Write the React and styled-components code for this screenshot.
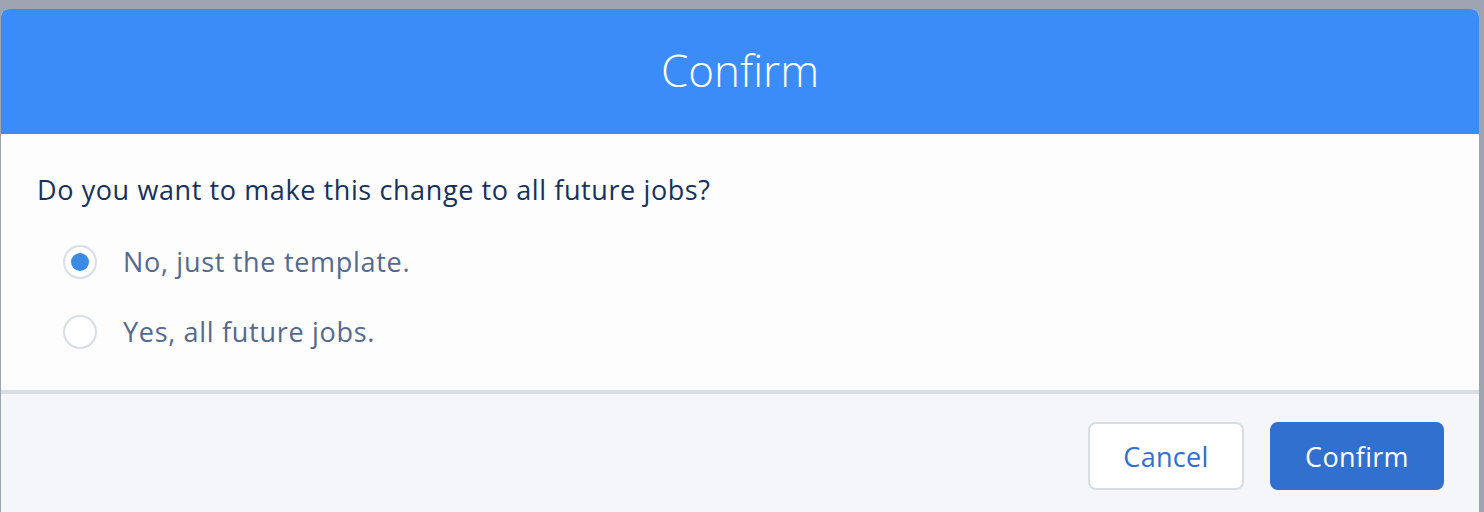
import React, { useState } from "react";
import styled, { createGlobalStyle } from "styled-components";

const Global = createGlobalStyle`
  html, body { margin: 0; padding: 0; }
  body {
    background: #9ea5b0;
    font-family: "Open Sans", "Liberation Sans", sans-serif;
    height: 512px;
    overflow: hidden;
  }
`;

const Backdrop = styled.div`
  height: 512px;
  padding: 9px 5px 0 1px;
  box-sizing: border-box;
  display: flex;
  flex-direction: column;
`;

const Modal = styled.div`
  flex: 1;
  display: flex;
  flex-direction: column;
  border-radius: 8px 8px 0 0;
  overflow: hidden;
  background: #fff;
`;

const Header = styled.header`
  height: 125px;
  background: #3b8cf8;
  display: flex;
  align-items: center;
  justify-content: center;
`;

const Title = styled.h2`
  margin: 0 0 4px;
  color: #fff;
  font-weight: 300;
  font-size: 44px;
  line-height: 56px;
`;

const Body = styled.div`
  height: 256px;
  background: #fdfdfd;
  padding: 38px 36px 0;
  box-sizing: border-box;
`;

const Question = styled.p`
  margin: 0 0 36px;
  font-size: 27px;
  letter-spacing: 0.6px;
  color: #16325c;
  line-height: 36px;
`;

const Options = styled.div`
  display: flex;
  flex-direction: column;
  gap: 34px;
  padding-left: 26px;
`;

const Option = styled.label`
  display: flex;
  align-items: center;
  gap: 26px;
  font-size: 27px;
  letter-spacing: 0.7px;
  color: #54698d;
  line-height: 36px;
  cursor: pointer;
`;

const Radio = styled.span`
  width: 34px;
  height: 34px;
  flex: none;
  box-sizing: border-box;
  border-radius: 50%;
  border: 2px solid #d8dde6;
  background: #fff;
  display: flex;
  align-items: center;
  justify-content: center;
  &::after {
    content: "";
    width: 18px;
    height: 18px;
    border-radius: 50%;
    background: ${(p) => (p.$checked ? "#3b8ae6" : "transparent")};
  }
`;

const Divider = styled.div`
  height: 4px;
  background: #d8dde6;
`;

const Footer = styled.footer`
  flex: 1;
  background: #f4f6f9;
  display: flex;
  justify-content: flex-end;
  align-items: flex-start;
  gap: 26px;
  padding: 28px 35px 0 0;
`;

const Button = styled.button`
  height: 68px;
  width: ${(p) => p.$w}px;
  box-sizing: border-box;
  border-radius: 8px;
  font-family: inherit;
  font-size: 27px;
  letter-spacing: 0.3px;
  cursor: pointer;
  border: 2px solid ${(p) => (p.$primary ? "#3170cf" : "#d8dde6")};
  background: ${(p) => (p.$primary ? "#3170cf" : "#fff")};
  color: ${(p) => (p.$primary ? "#fff" : "#3070cf")};
`;

export default function App() {
  const [choice, setChoice] = useState("no");
  return (
    <>
      <Global />
      <Backdrop>
        <Modal>
          <Header>
            <Title>Confirm</Title>
          </Header>
          <Body>
            <Question>Do you want to make this change to all future jobs?</Question>
            <Options>
              <Option onClick={() => setChoice("no")}>
                <Radio $checked={choice === "no"} />
                No, just the template.
              </Option>
              <Option onClick={() => setChoice("yes")}>
                <Radio $checked={choice === "yes"} />
                Yes, all future jobs.
              </Option>
            </Options>
          </Body>
          <Divider />
          <Footer>
            <Button $w={156}>Cancel</Button>
            <Button $w={174} $primary>Confirm</Button>
          </Footer>
        </Modal>
      </Backdrop>
    </>
  );
}
